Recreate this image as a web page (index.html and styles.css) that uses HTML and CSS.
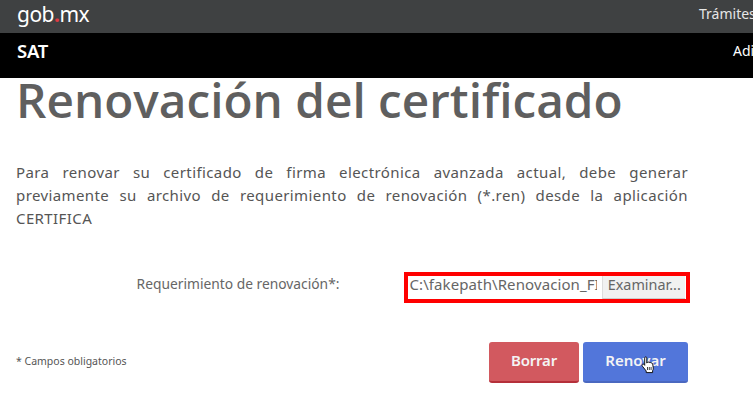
FILE: index.html
```html
<!DOCTYPE html>
<html lang="es">

<head>
    <meta charset="UTF-8">
    <meta name="viewport" content="width=device-width, initial-scale=1.0">
    <title>Renovación del certificado</title>
    <link rel="stylesheet" href="styles.css">
</head>

<body>

    <div class="top-bar">
        <div class="gob-logo">gob<span class="gob-dot">.</span>mx</div>
        <div class="top-link">Trámites</div>
    </div>

    <div class="sub-bar">
        <div class="sub-title">SAT</div>
        <div class="sub-link">Adi</div>
    </div>

    <div class="container">
        <h1>Renovación del certificado</h1>

        <p class="intro">Para renovar su certificado de firma electrónica avanzada actual, debe generar previamente su archivo de requerimiento de renovación (*.ren) desde la aplicación CERTIFICA</p>

        <div class="file-row">
            <div class="file-label">Requerimiento de renovación*:</div>
            <div class="file-box">
                <div class="file-path">C:\fakepath\Renovacion_FIEL</div>
                <div class="file-button">Examinar...</div>
            </div>
        </div>

        <div class="actions">
            <div class="required-note">* Campos obligatorios</div>
            <div class="btn btn-clear">Borrar</div>
            <div class="btn btn-renew">
                Renovar
                <svg class="hand-cursor" width="14" height="18" viewBox="0 0 14 18">
                    <path d="M4 1.2c.8-.6 1.8-.1 1.8.9v5l.6-.9c.7-.4 1.5-.2 1.8.5.6-.5 1.5-.3 1.8.4.7-.3 1.5 0 1.7.8l.6 4.2c.1 1-.2 1.8-.7 2.6v1.9H5.200v-1.600L1.400 10.200c-.6-.8-.4-1.700.3-2 .6-.2 1.100 0 1.500.5l.5.6V2.200c0-.4 0-.8.300-1z" fill="#fff" stroke="#111" stroke-width="1"/>
                    <path d="M6.500 11v3M8.300 11v3M10.100 11v3" stroke="#111" stroke-width=".8"/>
                </svg>
            </div>
        </div>
    </div>

</body>

</html>
```

FILE: styles.css
```css
body {
    font-family: "Noto Sans", "Open Sans", Arial, sans-serif;
    margin: 0;
    padding: 0;
    background-color: #fff;
    color: #555;
    overflow: hidden;
}

.top-bar {
    display: grid;
    grid-template-columns: 699px auto;
    height: 33px;
    background-color: #3f4142;
    color: #fff;
    white-space: nowrap;
}

.gob-logo {
    padding-left: 17px;
    font-size: 21px;
    line-height: 28px;
    letter-spacing: -0.5px;
}

.gob-dot {
    color: #e03a42;
    font-weight: 700;
}

.top-link {
    font-size: 14px;
    line-height: 27px;
    color: #e6e6e6;
}

.sub-bar {
    display: grid;
    grid-template-columns: 733px auto;
    height: 45px;
    background-color: #000;
    color: #fff;
    white-space: nowrap;
}

.sub-title {
    padding-left: 17px;
    font-size: 18.500px;
    font-weight: 600;
    line-height: 35px;
    letter-spacing: -0.3px;
}

.sub-link {
    font-size: 14px;
    line-height: 36px;
}

.container {
    padding: 0 65px 0 16px;
}

h1 {
    margin: 0;
    font-family: "Open Sans", sans-serif;
    font-size: 47.700px;
    font-weight: 600;
    line-height: 44px;
    color: #5f5f5f;
    white-space: nowrap;
}

.intro {
    margin: 39px 0 0;
    font-size: 15px;
    letter-spacing: 0.4px;
    line-height: 23px;
    text-align: justify;
    color: #555;
}

.file-row {
    display: flex;
    align-items: center;
    margin-top: 42px;
}

.file-label {
    width: 324px;
    padding-bottom: 8px;
    text-align: right;
    font-size: 13.800px;
    color: #666;
}

.file-box {
    display: flex;
    align-items: center;
    box-sizing: border-box;
    width: 286px;
    height: 31px;
    margin: 0 -2px 0 65px;
    padding: 0 1px;
    border: 4px solid #f00;
    background-color: #fff;
}

.file-path {
    width: 188px;
    padding-bottom: 8px;
    overflow: hidden;
    white-space: nowrap;
    font-size: 15px;
    letter-spacing: 0.1px;
    line-height: 20px;
    color: #666;
}

.file-button {
    flex: 1;
    height: 22px;
    margin-left: 5px;
    text-align: center;
    font-size: 14.400px;
    line-height: 18px;
    color: #666;
    background-color: #f1f1f1;
    border-bottom: 1px solid #ccc;
    border-left: 1px solid #ddd;
}

.actions {
    display: flex;
    align-items: center;
    margin-top: 39px;
}

.required-note {
    flex: 1;
    padding-bottom: 3px;
    font-size: 10.500px;
    color: #555;
}

.btn {
    position: relative;
    box-sizing: border-box;
    height: 41px;
    border-radius: 3px;
    text-align: center;
    font-size: 15px;
    font-weight: 600;
    line-height: 37px;
    color: #f4f4f4;
}

.btn-clear {
    width: 90px;
    background-color: #d2595f;
    border-bottom: 2px solid #b5303a;
    letter-spacing: -0.2px;
}

.btn-renew {
    width: 105px;
    margin-left: 4px;
    background-color: #5276da;
    border-bottom: 2px solid #4a68c0;
}

.hand-cursor {
    position: absolute;
    left: 58px;
    top: 14px;
}
```
